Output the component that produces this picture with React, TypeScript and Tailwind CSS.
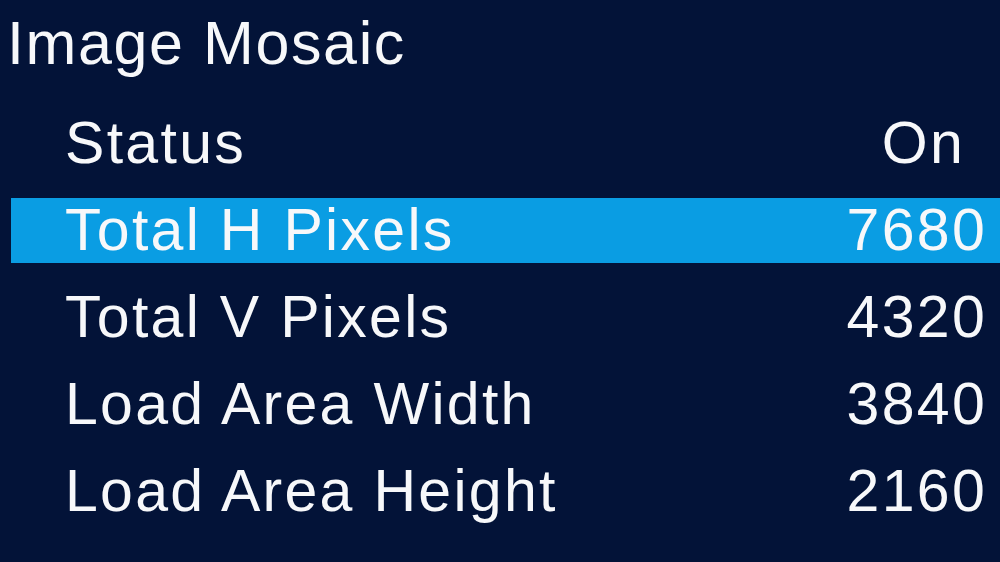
export default function App() {
  const rows: { label: string; value: string; selected?: boolean; valuePad?: string }[] = [
    { label: "Status", value: "On", valuePad: "pr-[35px]" },
    { label: "Total H Pixels", value: "7680", selected: true },
    { label: "Total V Pixels", value: "4320" },
    { label: "Load Area Width", value: "3840" },
    { label: "Load Area Height", value: "2160" },
  ];
  return (
    <div
      className="w-[1000px] h-[562px] overflow-hidden bg-[#031338] text-[#f7f8fa]"
      style={{ fontFamily: '"Liberation Sans", Arial, sans-serif' }}
    >
      <div className="pt-[8px] pl-[7px] text-[61px] leading-[70px] tracking-[1.6px]">Image Mosaic</div>
      <div className="mt-[33px] flex flex-col gap-[22px] pl-[11px]">
        {rows.map((r) => (
          <div
            key={r.label}
            className={
              "flex h-[65px] items-center justify-between pl-[54px] text-[59px] leading-[65px] tracking-[2.3px] " +
              (r.selected ? "bg-[#0a9de3]" : "")
            }
          >
            <span>{r.label}</span>
            <span className={r.valuePad ?? "pr-[13px]"}>{r.value}</span>
          </div>
        ))}
      </div>
    </div>
  );
}
